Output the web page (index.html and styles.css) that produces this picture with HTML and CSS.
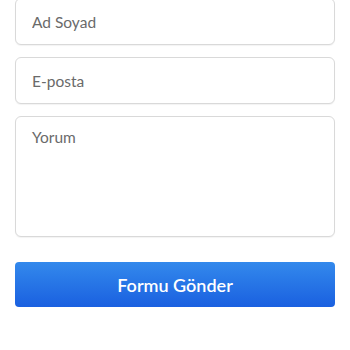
FILE: index.html
```html
<!DOCTYPE html>
<html lang="tr">
<head>
<meta charset="utf-8">
<link rel="stylesheet" href="styles.css">
</head>
<body>
<form class="form">
  <input class="field" type="text" placeholder="Ad Soyad">
  <input class="field" type="email" placeholder="E-posta">
  <textarea class="field area" placeholder="Yorum"></textarea>
  <button class="submit" type="button">Formu Gönder</button>
</form>
</body>
</html>
```

FILE: styles.css
```css
html, body {
  margin: 0;
  padding: 0;
  background: #ffffff;
}
.form {
  display: flex;
  flex-direction: column;
  width: 320px;
  margin: -2px auto 0 15px;
  font-family: "Lato", "Liberation Sans", sans-serif;
}
.field {
  box-sizing: border-box;
  display: block;
  width: 100%;
  height: 47px;
  margin: 0 0 12px 0;
  padding: 0 16px;
  border: 1px solid #d9d9d9;
  border-radius: 6px;
  background: #ffffff;
  font-family: inherit;
  font-size: 15.5px;
  font-weight: 400;
  color: #666666;
  box-shadow: 0 1px 1px rgba(0,0,0,0.05);
  outline: none;
}
.field::placeholder {
  color: #6a6a6a;
}
.area {
  height: 121px;
  padding-top: 11px;
  resize: none;
  margin-bottom: 25px;
}
.submit {
  box-sizing: border-box;
  width: 100%;
  height: 45px;
  border: none;
  border-radius: 4px;
  background: linear-gradient(to bottom, #3389ec, #1a60e0);
  color: #ffffff;
  font-family: inherit;
  font-size: 18px;
  font-weight: 600;
  cursor: pointer;
}
```
